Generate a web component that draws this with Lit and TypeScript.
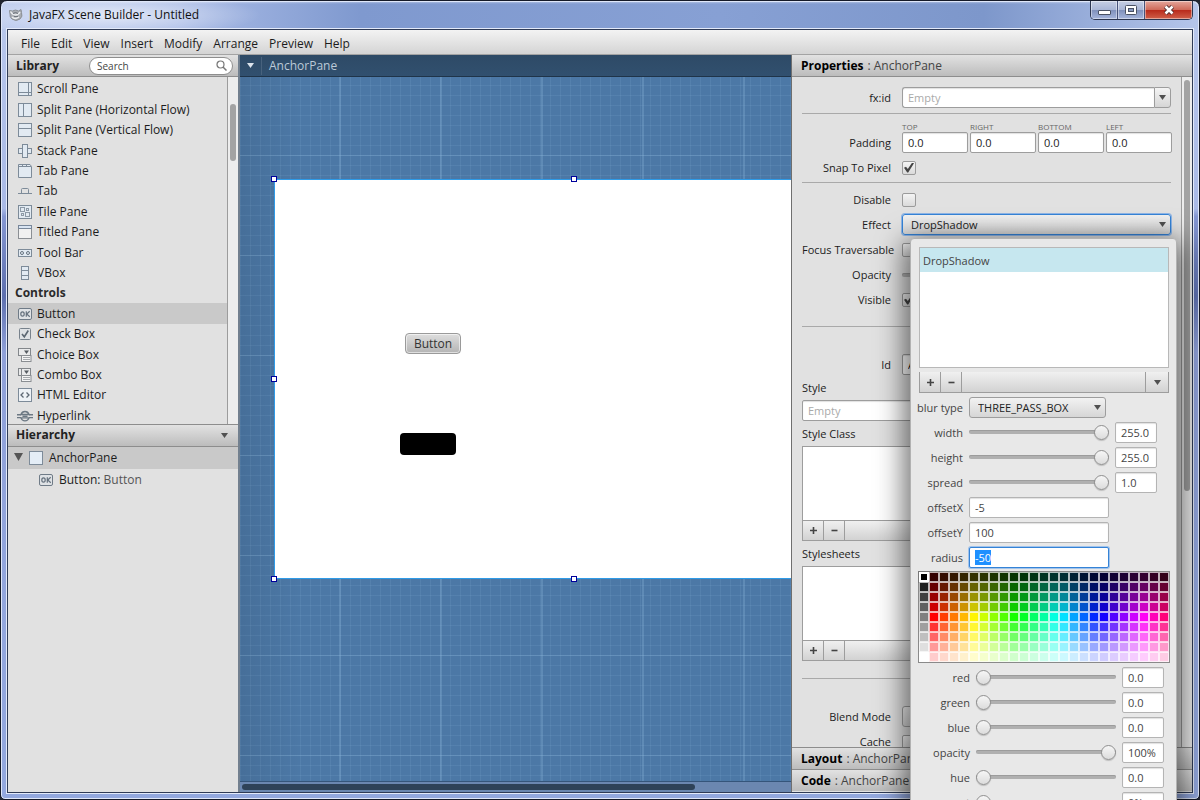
import { LitElement, html, css, svg, nothing } from "lit";
import { customElement, query } from "lit/decorators.js";
import { classMap } from "lit/directives/class-map.js";
import { styleMap } from "lit/directives/style-map.js";

const S = "#7d8b99";
const F = "#e2eaf2";

const ok = svg`<rect x="0.5" y="1.5" width="13" height="11" rx="1.5" fill="#dfe2e5" stroke="#6f7b87"/>
  <ellipse cx="4.500" cy="7" rx="1.700" ry="2.200" fill="none" stroke="#66727e" stroke-width="1.200"/>
  <path d="M8.300 4.200v5.600M11.700 4.200L8.700 7l3.100 2.800" fill="none" stroke="#66727e" stroke-width="1.200"/>`;

const drop = svg`<rect x="0.5" y="0.5" width="12" height="7" fill="#e9eaeb" stroke="#83878b"/>
  <path d="M6 2.500h5L8.500 6z" fill="#555b61"/>
  <rect x="3.500" y="7.500" width="9.500" height="6" fill="#f4f4f4" stroke="#8a8e92"/>
  <path d="M5 9.500h7M5 11.500h7" stroke="#a5a9ad"/>`;

const icons: Record<string, unknown> = {
  scroll: svg`<rect x="0.5" y="0.5" width="13" height="13" fill="${F}" stroke="${S}"/>
    <path d="M10.500 1v12M1 10.500h12" stroke="${S}"/>`,
  splitH: svg`<rect x="0.5" y="0.5" width="13" height="13" fill="${F}" stroke="${S}"/>
    <path d="M5.500 1v12" stroke="${S}"/>`,
  splitV: svg`<rect x="0.5" y="0.5" width="13" height="13" fill="${F}" stroke="${S}"/>
    <path d="M1 5.500h12" stroke="${S}"/>`,
  stack: svg`<rect x="0.5" y="4.500" width="13" height="5" fill="${F}" stroke="${S}"/>
    <rect x="4.500" y="0.5" width="5" height="13" fill="${F}" stroke="${S}"/>`,
  tabPane: svg`<path d="M0.5 13.500v-13h11.500l1.500 2v11z" fill="${F}" stroke="${S}"/>
    <path d="M1 2.500h12M4.500 1v1M8.500 1v1" stroke="${S}"/>`,
  tab: svg`<path d="M0 9.500h14M3.500 9.500v-4q0-1 1-1h5q1 0 1 1v4" fill="none" stroke="${S}"/>`,
  tile: svg`<rect x="0.5" y="0.5" width="13" height="13" fill="${F}" stroke="${S}"/>
    <g fill="none" stroke="#8d9aa7"><rect x="2.500" y="2.500" width="4" height="4"/><rect x="8.500" y="3.500" width="2" height="2"/>
    <rect x="3.500" y="8.500" width="2" height="2"/><rect x="7.500" y="7.500" width="4" height="4"/></g>`,
  titled: svg`<rect x="0.5" y="0.5" width="13" height="13" fill="#f1f1f1" stroke="#8b8f94"/>
    <rect x="0.5" y="0.5" width="13" height="3" fill="#d8e4f2" stroke="#78879a"/>`,
  toolBar: svg`<rect x="0.5" y="3.500" width="13" height="7" fill="${F}" stroke="${S}"/>
    <g fill="none" stroke="#66737f"><circle cx="4" cy="7" r="1.500"/><circle cx="10" cy="7" r="1.500"/></g>`,
  vbox: svg`<rect x="3.500" y="0.5" width="7" height="13" fill="${F}" stroke="${S}"/>
    <path d="M4 4.500h6M4 9.500h6" stroke="${S}"/>`,
  button: ok,
  check: svg`<rect x="1.500" y="1.500" width="11" height="11" rx="1" fill="#dfe2e5" stroke="#78828c"/>
    <path d="M4 7l2.300 2.800L10.300 3.500" fill="none" stroke="#5d6873" stroke-width="1.600"/>`,
  choice: drop,
  combo: svg`${drop}<path d="M3.500 1v6" stroke="#83878b"/>`,
  html: svg`<rect x="0.5" y="0.5" width="13" height="13" fill="#eef2f6" stroke="${S}"/>
    <path d="M5.500 4.500L3 7l2.500 2.500M8.500 4.500L11 7l-2.500 2.500" fill="none" stroke="#5d6873" stroke-width="1.300"/>`,
  link: svg`<g fill="none" stroke="#6c7883" stroke-width="1.400"><path d="M-1 5.800h4M11 5.800h4M-1 8.600h4M11 8.600h4M4.500 7.200h5"/>
    <path d="M3 5.500q1-3 4-3t4 3zM3 8.900q1 3 4 3t4-3z"/></g>`,
  anchor: svg`<rect x="0.5" y="0.5" width="13" height="13" fill="#e4edf6" stroke="${S}"/>`,
};

const icon = (name: string) =>
  html`<svg class="icon" width="14" height="14" viewBox="0 0 14 14" aria-hidden="true">${icons[name]}</svg>`;

const arrow = html`<svg class="arrow" width="7" height="5" viewBox="0 0 7 5" aria-hidden="true">
  <path d="M0 0h7L3.500 5z" fill="currentColor" /></svg>`;

const menus = ["File", "Edit", "View", "Insert", "Modify", "Arrange", "Preview", "Help"];

const library: [string, string][] = [
  ["scroll", "Scroll Pane"],
  ["splitH", "Split Pane (Horizontal Flow)"],
  ["splitV", "Split Pane (Vertical Flow)"],
  ["stack", "Stack Pane"],
  ["tabPane", "Tab Pane"],
  ["tab", "Tab"],
  ["tile", "Tile Pane"],
  ["titled", "Titled Pane"],
  ["toolBar", "Tool Bar"],
  ["vbox", "VBox"],
  ["", "Controls"],
  ["button", "Button"],
  ["check", "Check Box"],
  ["choice", "Choice Box"],
  ["combo", "Combo Box"],
  ["html", "HTML Editor"],
  ["link", "Hyperlink"],
];

const HUES = 24;
const SHADES = 9;

function hsb(h: number, s: number, b: number): string {
  const f = (n: number) => {
    const k = (n + h / 60) % 6;
    return Math.round(255 * (b - b * s * Math.max(0, Math.min(k, 4 - k, 1))));
  };
  return `rgb(${f(5)}, ${f(3)}, ${f(1)})`;
}

const swatches: string[] = [];
for (let row = 0; row < SHADES; row++) {
  const grey = Math.round((255 * row) / (SHADES - 1));
  swatches.push(`rgb(${grey}, ${grey}, ${grey})`);
  for (let col = 0; col < HUES; col++) {
    const hue = (col * 360) / (HUES + 1);
    swatches.push(row < 5 ? hsb(hue, 1, (row + 1) / 5) : hsb(hue, (9 - row) / 5, 1));
  }
}

@customElement("app-root")
export class AppRoot extends LitElement {
  static styles = css`
    :host {
      display: block;
      position: relative;
      height: 100vh;
      overflow: hidden;
      background: #20242e;
      color: #1c1c1c;
      font: 12px/16px "Open Sans", "Noto Sans", sans-serif;
    }
    * { box-sizing: border-box; }
    button, input, select { font: inherit; color: inherit; margin: 0; }
    button { padding: 0; border: 0; background: none; }
    ul { margin: 0; padding: 0; list-style: none; }
    h1, h2 { margin: 0; font: inherit; }
    svg { display: block; flex: none; }

    .window {
      display: flex;
      flex-direction: column;
      height: 100%;
      padding: 0 6px 6px;
      border: 1px solid #151a28;
      border-radius: 7px 7px 5px 5px;
      background:
        radial-gradient(ellipse 150px 22px at 110px 14px, #ffffffa0, #ffffff00),
        linear-gradient(180deg, #ffffff70, #ffffff00 3px),
        linear-gradient(90deg, #bccbee, #a9bbe6 15%, #7f99cf 30%, #87a0d4 60%, #7d97cb 82%, #b5c5ea) top / 100% 28px no-repeat,
        linear-gradient(180deg, #b9c8ec, #a9b9e6 26%, #8597d2 27%, #5d6fae 37%, #8fa0d8 44%, #93a7de 80%, #93a8de);
      box-shadow: inset 0 0 0 1px #dfe7f9;
    }
    .titlebar {
      display: flex;
      align-items: flex-start;
      flex: none;
      height: 28px;
      padding-left: 2px;
    }
    .titlebar h1 {
      display: flex;
      align-items: center;
      gap: 6px;
      flex: 1;
      height: 28px;
      color: #111;
    }
    .winbtns {
      display: flex;
      border: 1px solid #2c3650;
      border-top: 0;
      border-radius: 0 0 5px 5px;
      overflow: hidden;
    }
    .winbtns button {
      display: grid;
      place-items: center;
      width: 27px;
      height: 18px;
      border-right: 1px solid #46527a;
      background: linear-gradient(#c6cfe4, #a9b6d6 48%, #7f90bb 50%, #a5b5dc);
      box-shadow: inset 0 0 0 1px #ffffff70;
    }
    .winbtns .min { padding-top: 6px; }
    .winbtns .close {
      width: 47px;
      border-right: 0;
      background: linear-gradient(#e4a79c, #cf6a5a 48%, #b8291a 50%, #d0604a);
    }

    .client {
      display: flex;
      flex-direction: column;
      flex: 1;
      min-height: 0;
      border: 1px solid #2f3b56;
      outline: 1px solid #e3eafa;
      background: #e1e1e1;
    }
    .menubar {
      display: flex;
      flex: none;
      height: 25px;
      padding-left: 7px;
      border-bottom: 1px solid #a3a3a3;
      background: linear-gradient(#f3f3f3, #d4d4d4);
    }
    .menubar button { padding: 3px 5px 0 6px; }
    .work { display: flex; flex: 1; min-height: 0; }

    .head {
      display: flex;
      align-items: center;
      flex: none;
      height: 22px;
      padding: 0 8px;
      border-bottom: 1px solid #8d8d8d;
      background: linear-gradient(#e2e2e2, #bcbcbc);
      color: #444;
    }
    .head b { color: #222; }
    .right .head b { color: #000; }

    .left {
      display: flex;
      flex-direction: column;
      flex: none;
      width: 232px;
      border-right: 2px solid #72808f;
    }
    .lib, .hier { display: flex; flex-direction: column; flex: 1 1 0; min-height: 0; }
    .lib .head { justify-content: space-between; padding-right: 5px; }
    .search {
      display: flex;
      align-items: center;
      width: 144px;
      height: 18px;
      padding: 0 5px 0 7px;
      border: 1px solid #8e8e8e;
      border-radius: 9px;
      background: #fff;
    }
    .search input {
      flex: 1;
      min-width: 0;
      padding: 0;
      border: 0;
      outline: 0;
      background: none;
      font-size: 10px;
    }
    .search input::placeholder { color: #444; }
    .scroller { display: flex; flex: 1; min-height: 0; }
    .items {
      display: grid;
      grid-auto-rows: 20px 21px 20px 21px 20px;
      align-content: start;
      flex: 1;
      min-width: 0;
      padding-top: 2px;
      overflow: hidden;
    }
    .item { display: flex; align-items: center; gap: 5px; padding-left: 10px; white-space: nowrap; }
    .item.title { padding-left: 7px; color: #2b2b2b; }
    .selected { background: #c9c9c9; }
    .icon { overflow: visible; }
    .bar {
      flex: none;
      width: 11px;
      padding: 3px 2px;
      border-left: 1px solid #9c9c9c;
      background: #ededed;
    }
    .thumb { width: 6px; border-radius: 3px; background: #a3a3a3; }
    .lib .thumb { margin-top: 24px; height: 57px; }

    .hier .head { justify-content: space-between; padding-right: 10px; border-top: 1px solid #8d8d8d; height: 23px; }
    .node { display: flex; align-items: center; gap: 6px; height: 22px; padding-left: 6px; }
    .node .arrow { width: 9px; height: 9px; color: #555; }
    .node.child { padding-left: 31px; }
    .node em { font-style: normal; color: #555; }

    .canvas { display: flex; flex-direction: column; flex: 1; min-width: 0; background: #6b87b0; }
    .crumbs {
      display: flex;
      align-items: center;
      flex: none;
      height: 22px;
      border-bottom: 1px solid #1f3449;
      background: linear-gradient(#2e4a66, #31506f);
      color: #bccad8;
    }
    .crumbs button { display: grid; place-items: center; width: 22px; height: 18px; border-right: 1px solid #48627d; color: #dce4ec; }
    .crumbs span { padding-left: 7px; }
    .stage {
      position: relative;
      flex: 1;
      min-height: 0;
      overflow: hidden;
      border-bottom: 1px solid #35557a;
      background:
        linear-gradient(90deg, #00000014, #0000 60px),
        linear-gradient(#8ab4d84d 0 1px, #0000 1px) 0 78px / 100% 100px,
        linear-gradient(90deg, #8ab4d84d 0 2px, #0000 2px) 99px 0 / 101px 100%,
        linear-gradient(#8ab4d824 0 1px, #0000 1px) 0 8px / 100% 10px,
        repeating-linear-gradient(90deg, #8ab4d824 0 1px, #0000 1px 10px),
        #4c78a6;
    }
    .pane {
      position: absolute;
      left: 34px;
      top: 102px;
      width: 600px;
      height: 400px;
      border: 1px solid #2e9be8;
      background: #fff;
    }
    .handle { position: absolute; width: 6px; height: 6px; border: 1px solid #00009c; background: #fff; }
    .fxbutton, .shadow { position: absolute; width: 56px; border-radius: 4px; }
    .fxbutton {
      left: 130px;
      top: 153px;
      height: 21px;
      border: 1px solid #9a9a9a;
      background: linear-gradient(#dedede, #b4b4b4);
      box-shadow: inset 0 0 0 1px #ffffff90;
      color: #333;
    }
    .shadow { left: 125px; top: 253px; height: 22px; background: #000; }
    .hscroll { flex: none; height: 10px; padding: 2px 96px 2px 2px; background: #6b87b0; }
    .hscroll div { height: 6px; border-radius: 3px; background: #2e4258; }

    .right { display: flex; flex-direction: column; flex: none; width: 401px; padding-bottom: 1px; border-left: 1px solid #6f6f6f; }
    .right .head { padding-left: 9px; gap: 4px; }
    .right .foot { border-top: 1px solid #8d8d8d; border-bottom: 0; }
    .props {
      display: flex;
      flex-direction: column;
      flex: 1;
      min-width: 0;
      overflow: hidden;
      padding: 10px 10px 0;
      font-size: 11px;
    }
    .right .thumb { height: 411px; }
    hr { width: 100%; height: 1px; margin: 0; border: 0; background: #a9a9a9; flex: none; }
    .group { display: flex; flex-direction: column; gap: 4px; flex: none; }
    .row { display: grid; grid-template-columns: 89px 1fr; column-gap: 11px; align-items: center; height: 21px; }
    .row > label, .row > .lab { text-align: right; white-space: nowrap; }
    .a { margin-bottom: 5px; }
    .b { margin: 8px 0 4px; }
    .c { margin: 6px 0 16px; }
    .d { margin: 27px 0 17px; gap: 0; }
    .e { margin-top: 27px; }
    .caps, .four { display: grid; grid-template-columns: repeat(4, 66px); gap: 2px; }
    .caps { padding-left: 100px; margin-bottom: -4px; font-size: 8px; line-height: 10px; color: #666; }
    .text {
      width: 100%;
      height: 21px;
      padding: 0 5px;
      border: 1px solid #9d9d9d;
      border-radius: 2px;
      outline: 0;
      background: #fff;
      box-shadow: inset 0 1px 1px #00000020;
    }
    .text::placeholder { color: #aaa; }
    .combo { display: flex; }
    .combo .text { border-right: 0; border-radius: 3px 0 0 3px; flex: 1; min-width: 0; }
    .combo button {
      display: grid;
      place-items: center;
      width: 17px;
      height: 21px;
      border: 1px solid #9d9d9d;
      border-radius: 0 3px 3px 0;
      background: linear-gradient(#f4f4f4, #d6d6d6);
    }
    .arrow { color: #505050; }
    .crumbs .arrow { color: #dce4ec; }
    .tick {
      appearance: none;
      display: grid;
      place-items: center;
      width: 14px;
      height: 14px;
      border: 1px solid #9b9b9b;
      border-radius: 2px;
      background: linear-gradient(#f4f4f4, #dadada);
    }
    .tick:checked::before {
      content: "";
      width: 10px;
      height: 10px;
      background: #444;
      clip-path: polygon(0 52%, 20% 42%, 38% 66%, 82% 0, 100% 8%, 42% 100%, 32% 100%);
    }
    .select { display: grid; align-items: center; color: #222; }
    .select select, .select .arrow { grid-area: 1 / 1; }
    .select .arrow { justify-self: end; margin-right: 5px; pointer-events: none; }
    .select select {
      appearance: none;
      width: 100%;
      height: 21px;
      padding: 0 20px 0 8px;
      border: 1px solid #9d9d9d;
      border-radius: 3px;
      outline: 0;
      background: linear-gradient(#f2f2f2, #d6d6d6);
    }
    .select.focused select { border-color: #3583d6; box-shadow: 0 0 0 1px #5d9be8a0; }
    .listbox { height: 74px; border: 1px solid #9d9d9d; border-bottom: 0; background: #fff; }
    .tools { display: flex; height: 21px; border: 1px solid #9d9d9d; background: linear-gradient(#f0f0f0, #d2d2d2); }
    .tools button { display: grid; place-items: center; width: 21px; border-right: 1px solid #9d9d9d; color: #444; }
    .tools .more { width: 23px; margin-left: auto; border-right: 0; border-left: 1px solid #9d9d9d; }
    .field { display: block; margin: 5px 0 4px; height: 16px; }

    .range { appearance: none; width: 140px; height: 15px; background: none; }
    .range::-webkit-slider-runnable-track { height: 4px; border-radius: 2px; background: #b0b0b0; box-shadow: inset 0 1px #9c9c9c; }
    .range::-webkit-slider-thumb {
      appearance: none;
      width: 15px;
      height: 15px;
      margin-top: -5px;
      border: 1px solid #8f8f8f;
      border-radius: 50%;
      background: linear-gradient(#f6f6f6, #dcdcdc);
      box-shadow: 0 1px 1px #00000030;
    }

    .popup {
      position: absolute;
      top: 238px;
      right: 23px;
      width: 267px;
      padding: 8px 7px 8px 8px;
      border: 1px solid #b2b2b2;
      border-radius: 4px;
      background: #e8e8e8;
      box-shadow: 0 8px 28px 6px #00000090;
      color: #444;
      font-size: 11px;
    }
    .popup .listbox { height: 121px; border: 1px solid #b8b8b8; }
    .popup .listbox li { height: 24px; padding: 5px 3px; background: #c6e7ef; }
    .popup .tools { margin-top: 4px; border-top: 0; }
    .params { display: grid; grid-template-columns: 44px 140px 42px; gap: 4px 6px; align-items: center; margin-top: 4px; }
    .params.color { grid-template-columns: 51px 140px 42px; }
    .params label { justify-self: end; white-space: nowrap; }
    .params .range { margin-bottom: 2px; }
    .params .text { border-color: #b4b4b4; }
    .params .select { width: 137px; }
    .params .wide { grid-column: 2 / 4; }
    .params .text.wide { width: 140px; }
    .params .text.active { border-color: #3583d6; box-shadow: 0 0 0 1px #6aa6ee90; }
    .active::selection { background: #1e90ff; color: #fff; }
    .palette {
      display: grid;
      grid-template-columns: repeat(25, 10px);
      grid-auto-rows: 10px;
      width: 252px;
      margin: 3px 0 0 -1px;
      border: 1px solid #8a8a8a;
      background: #c0bcc0;
    }
    .palette button { border: 1px solid #ffffffb0; }
    .palette .chosen { border: 2px solid #fff; box-shadow: 0 0 0 1px #777; }
  `;

  @query(".active") private active!: HTMLInputElement;

  firstUpdated() {
    this.active.focus({ preventScroll: true });
    this.active.select();
  }

  private tools(more = false) {
    return html`<div class="tools">
      <button aria-label="Add"><svg width="7" height="7" viewBox="0 0 7 7"><path d="M3.500 0v7M0 3.500h7" stroke="currentColor" stroke-width="1.600" /></svg></button>
      <button aria-label="Remove"><svg width="7" height="7" viewBox="0 0 7 7"><path d="M0.500 3.500h6" stroke="currentColor" stroke-width="1.600" /></svg></button>
      ${more ? html`<button class="more" aria-label="More">${arrow}</button>` : nothing}
    </div>`;
  }

  private check(id: string, label: string, on = false) {
    return html`<div class="row">
      <label for=${id}>${label}</label><input id=${id} class="tick" type="checkbox" ?checked=${on} />
    </div>`;
  }

  private slider(name: string, value: number, max: number, text: string) {
    return html`<label for="s-${name}">${name}</label>
      <input id="s-${name}" class="range" type="range" min="0" max=${max} step="any" .value=${String(value)} />
      <input class="text" aria-label="${name} value" .value=${text} />`;
  }

  private entry(name: string, value: string, active = false) {
    return html`<label for="e-${name}">${name}</label>
      <input id="e-${name}" class=${classMap({ text: true, wide: true, active })} .value=${value} />`;
  }

  private renderLeft() {
    return html`<aside class="left">
      <section class="lib">
        <div class="head"><b>Library</b>
          <div class="search"><input aria-label="Search" placeholder="Search" />
            <svg width="11" height="11" viewBox="0 0 11 11"><circle cx="4.500" cy="4.500" r="3.500" fill="none" stroke="#777" stroke-width="1.200" /><path d="M7 7l3.500 3.500" stroke="#777" stroke-width="1.500" /></svg>
          </div>
        </div>
        <div class="scroller">
          <ul class="items">
            ${library.map(([name, text]) => name
              ? html`<li class=${classMap({ item: true, selected: text === "Button" })}>${icon(name)}${text}</li>`
              : html`<li class="item title"><b>${text}</b></li>`)}
          </ul>
          <div class="bar"><div class="thumb"></div></div>
        </div>
      </section>
      <section class="hier">
        <div class="head"><b>Hierarchy</b>${arrow}</div>
        <div class="node selected">
          <svg class="arrow" viewBox="0 0 9 9"><path d="M0 0h9L4.500 8z" fill="currentColor" /></svg>
          ${icon("anchor")}<span>AnchorPane</span>
        </div>
        <div class="node child">${icon("button")}<span>Button: <em>Button</em></span></div>
      </section>
    </aside>`;
  }

  private renderCanvas() {
    const handles = [[-2, -2], [298, -2], [-2, 198], [-2, 398], [298, 398]];
    return html`<main class="canvas">
      <div class="crumbs"><button aria-label="Path">${arrow}</button><span>AnchorPane</span></div>
      <div class="stage">
        <div class="pane">
          <button class="fxbutton">Button</button>
          <div class="shadow"></div>
          ${handles.map(([x, y]) => html`<i class="handle" style=${styleMap({ left: `${x - 2}px`, top: `${y - 2}px` })}></i>`)}
        </div>
      </div>
      <div class="hscroll"><div></div></div>
    </main>`;
  }

  private renderProps() {
    return html`<aside class="right">
      <div class="head"><b>Properties</b><span>: AnchorPane</span></div>
      <div class="scroller">
        <div class="props">
          <div class="group a">
            <div class="row"><label for="fxid">fx:id</label>
              <div class="combo"><input id="fxid" class="text" placeholder="Empty" /><button aria-label="Choose fx:id">${arrow}</button></div>
            </div>
          </div>
          <hr />
          <div class="group b">
            <div class="caps"><span>TOP</span><span>RIGHT</span><span>BOTTOM</span><span>LEFT</span></div>
            <div class="row"><span class="lab">Padding</span>
              <div class="four">
                ${["Top", "Right", "Bottom", "Left"].map((side) => html`<input class="text" aria-label="${side} padding" .value=${"0.0"} />`)}
              </div>
            </div>
            ${this.check("snap", "Snap To Pixel", true)}
          </div>
          <hr />
          <div class="group c">
            ${this.check("disable", "Disable")}
            <div class="row"><label for="effect">Effect</label>
              <div class="select focused"><select id="effect"><option>DropShadow</option></select>${arrow}</div>
            </div>
            ${this.check("focus", "Focus Traversable")}
            <div class="row"><label for="opac">Opacity</label><input id="opac" class="range" type="range" .value=${"100"} /></div>
            ${this.check("visible", "Visible", true)}
          </div>
          <hr />
          <div class="group d">
            <div class="row"><label for="id">Id</label><input id="id" class="text" .value=${"AnchorPane"} /></div>
            <label class="field" for="style">Style</label>
            <input id="style" class="text" placeholder="Empty" />
            <span class="field">Style Class</span>
            <div class="listbox"></div>${this.tools()}
            <span class="field">Stylesheets</span>
            <div class="listbox"></div>${this.tools()}
          </div>
          <hr />
          <div class="group e">
            <div class="row"><label for="blend">Blend Mode</label>
              <div class="select"><select id="blend"><option></option></select>${arrow}</div>
            </div>
            ${this.check("cache", "Cache")}
          </div>
        </div>
        <div class="bar"><div class="thumb"></div></div>
      </div>
      <div class="head foot"><b>Layout</b><span>: AnchorPane</span></div>
      <div class="head foot"><b>Code</b><span>: AnchorPane</span></div>
    </aside>`;
  }

  private renderPopup() {
    return html`<div class="popup" role="dialog" aria-label="Effect editor">
      <ul class="listbox"><li>DropShadow</li></ul>
      ${this.tools(true)}
      <div class="params">
        <label for="blur">blur type</label>
        <div class="select wide"><select id="blur"><option>THREE_PASS_BOX</option></select>${arrow}</div>
        ${this.slider("width", 255, 255, "255.0")}
        ${this.slider("height", 255, 255, "255.0")}
        ${this.slider("spread", 1, 1, "1.0")}
        ${this.entry("offsetX", "-5")}
        ${this.entry("offsetY", "100")}
        ${this.entry("radius", "-50", true)}
      </div>
      <div class="palette">
        ${swatches.map((color, i) => html`<button class=${classMap({ chosen: i === 0 })} aria-label=${color} style=${styleMap({ backgroundColor: color })}></button>`)}
      </div>
      <div class="params color">
        ${this.slider("red", 0, 255, "0.0")}
        ${this.slider("green", 0, 255, "0.0")}
        ${this.slider("blue", 0, 255, "0.0")}
        ${this.slider("opacity", 100, 100, "100%")}
        ${this.slider("hue", 0, 360, "0.0")}
        ${this.slider("sat", 0, 100, "0%")}
      </div>
    </div>`;
  }

  render() {
    return html`<div class="window">
        <header class="titlebar">
          <h1>
            <svg width="14" height="14" viewBox="0 0 14 14" aria-hidden="true">
              <path d="M0.500 2.500l3 0.500q3-2 6 0l2.500-1.500 0.500 3q1.500 4-1.500 6.500-4 3-8 0-2.500-2-2-5z" fill="#a9adb3" stroke="#8b9096" />
              <path d="M1.500 3.500q2 3.500 5 3.500t4.500-3M3 9q3 3 7 0" fill="none" stroke="#eceef0" stroke-width="1.400" />
              <path d="M4 5.500q2.500-2 5 0M5 8.500h4" fill="none" stroke="#6f757c" />
            </svg>
            JavaFX Scene Builder - Untitled
          </h1>
          <div class="winbtns">
            <button class="min" aria-label="Minimize"><svg width="13" height="6" viewBox="0 0 13 6"><rect x="0.500" y="0.500" width="12" height="4" rx="0.500" fill="#fff" stroke="#4a5264" /></svg></button>
            <button aria-label="Maximize"><svg width="12" height="10" viewBox="0 0 12 10"><rect x="0.500" y="0.500" width="11" height="9" rx="1" fill="#fff" stroke="#4a5264" /><rect x="3.500" y="3.500" width="5" height="3" fill="#8899c0" stroke="#4a5264" /></svg></button>
            <button class="close" aria-label="Close"><svg width="12" height="10" viewBox="0 0 12 10"><path d="M2.500 1.500l7 7M9.500 1.500l-7 7" stroke="#4d2a2a" stroke-width="4.400" /><path d="M2.500 1.500l7 7M9.500 1.500l-7 7" stroke="#fff" stroke-width="2.600" /></svg></button>
          </div>
        </header>
        <div class="client">
          <nav class="menubar">${menus.map((m) => html`<button>${m}</button>`)}</nav>
          <div class="work">${this.renderLeft()}${this.renderCanvas()}${this.renderProps()}</div>
        </div>
      </div>
      ${this.renderPopup()}`;
  }
}
